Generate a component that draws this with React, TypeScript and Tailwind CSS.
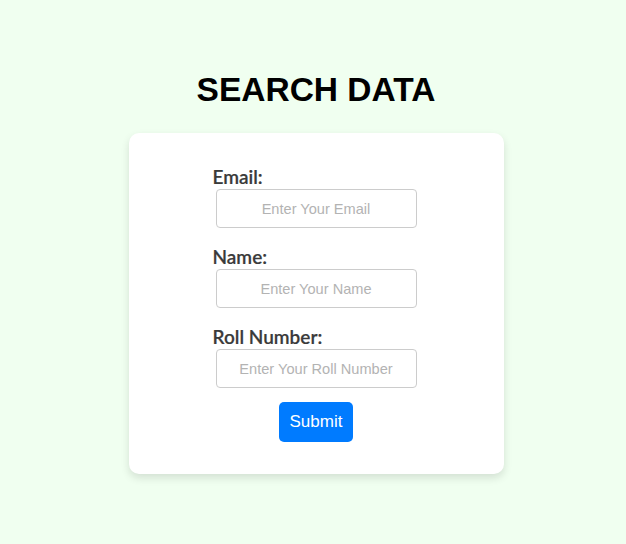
export default function App() {
  const fields = [
    { label: 'Email:', placeholder: 'Enter Your Email', type: 'email' },
    { label: 'Name:', placeholder: 'Enter Your Name', type: 'text' },
    { label: 'Roll Number:', placeholder: 'Enter Your Roll Number', type: 'text' },
  ];

  return (
    <div className="min-h-screen bg-[#f0fff0] flex flex-col items-center pt-[71px] pl-[6px]">
      <h1 className="font-['Liberation_Sans',Arial,sans-serif] text-[33.5px] font-bold leading-[38px] text-black">
        SEARCH DATA
      </h1>

      <form
        className="mt-[24px] w-[375px] rounded-[10px] bg-white shadow-[0_4px_8px_rgba(0,0,0,0.12)] pt-[33px] pb-[32px] flex flex-col items-center"
        onSubmit={(e) => e.preventDefault()}
      >
        <div className="w-[207px]">
          {fields.map((f, i) => (
            <div key={f.label} className={i > 0 ? 'mt-[18px]' : ''}>
              <label className="block font-['Lato',sans-serif] text-[19px] font-semibold leading-[22px] text-[#3a3a3a] [-webkit-text-stroke:0.2px_#3a3a3a]">
                {f.label}
              </label>
              <input
                type={f.type}
                placeholder={f.placeholder}
                className="mx-[3px] mt-[1px] block h-[39px] w-[201px] rounded-[4px] border border-[#ccc] bg-white text-center font-['Liberation_Sans',Arial,sans-serif] text-[14.6px] outline-none placeholder:text-[#b3b3b3]"
              />
            </div>
          ))}
        </div>
        <button
          type="submit"
          className="mt-[14px] h-[40px] rounded-[5px] bg-[#007bff] px-[10.5px] font-['Liberation_Sans',Arial,sans-serif] text-[17px] text-white"
        >
          Submit
        </button>
      </form>
    </div>
  );
}
